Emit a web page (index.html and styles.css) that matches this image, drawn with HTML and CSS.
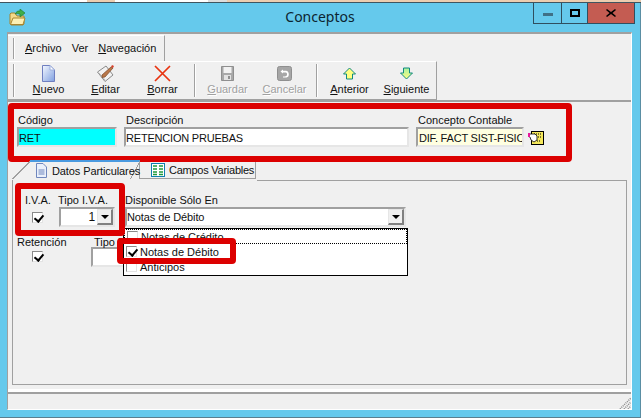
FILE: index.html
```html
<!DOCTYPE html>
<html lang="es">
<head>
    <meta charset="UTF-8">
    <meta name="viewport" content="width=device-width, initial-scale=1.0">
    <title>Conceptos</title>
    <link rel="stylesheet" href="styles.css">
</head>
<body>

<div class="desktop-strip"></div>

<div class="window">
    <div class="titlebar">
        <svg class="app-icon" width="17" height="17" viewBox="0 0 17 17">
            <path d="M1 5 L1 15 L2 16 L14 16 L15 15 L15 7 L8 7 L6 4 L2 4 Z" fill="#f3d98a" stroke="#a8852f"/>
            <path d="M1.500 15.500 L4 9 L16 9 L14 15.500 Z" fill="#fdf0b4" stroke="#a8852f"/>
            <path d="M6 5 Q8 1 11 2 L11 0 L16 4 L11 8 L11 5 Q8 4 6 5 Z" fill="#3fae49" stroke="#1c7a2c" stroke-width="0.600"/>
        </svg>
        <div class="title">Conceptos</div>
        <div class="win-buttons">
            <div class="win-btn win-min"><span class="min-glyph"></span></div>
            <div class="win-btn win-max"><span class="max-glyph"></span></div>
            <div class="win-btn win-close">
                <svg width="10" height="8" viewBox="0 0 10 8"><path d="M1 0 L5 3 L9 0 L10 1 L6.500 4 L10 7 L9 8 L5 5 L1 8 L0 7 L3.500 4 L0 1 Z" fill="#000"/></svg>
            </div>
        </div>
    </div>

    <div class="client">
        <div class="menu-band">
            <div class="gripper"></div>
            <div class="menu-item"><u>A</u>rchivo</div>
            <div class="menu-item">Ver</div>
            <div class="menu-item"><u>N</u>avegación</div>
        </div>

        <div class="tool-band">
            <div class="gripper"></div>
            <div class="tool-btn">
                <svg width="15" height="17" viewBox="0 0 15 17">
                    <defs><linearGradient id="pg" x1="0" y1="0" x2="1" y2="1"><stop offset="0" stop-color="#f4f8ff"/><stop offset="1" stop-color="#7f9fe0"/></linearGradient></defs>
                    <path d="M1.500 0.500 L9 0.500 L13.500 5 L13.500 16.500 L1.500 16.500 Z" fill="url(#pg)" stroke="#6f7fc0"/>
                    <path d="M9 0.500 L9 5 L13.500 5 Z" fill="#fff" stroke="#9fb0dc"/>
                </svg>
                <span><u>N</u>uevo</span>
            </div>
            <div class="tool-btn">
                <svg width="17" height="17" viewBox="0 0 17 17">
                    <path d="M0.500 7 L9 1 L16 10 L8 16.500 Z" fill="#f2f2f2" stroke="#8a8a8a"/>
                    <path d="M2 8 L8 15" stroke="#b8b8b8" fill="none"/>
                    <path d="M5 10 L14 2 L16 3 L8 12 L5 12.500 Z" fill="#b9774a" stroke="#7a4a2a" stroke-width="0.700"/>
                    <path d="M14 1 L16 0 L17 2 L15 3 Z" fill="#d8402c"/>
                </svg>
                <span><u>E</u>ditar</span>
            </div>
            <div class="tool-btn">
                <svg width="17" height="17" viewBox="0 0 17 17"><path d="M1 1 L16 16 M16 1 L1 16" stroke="#e8330f" stroke-width="1.700" fill="none"/></svg>
                <span><u>B</u>orrar</span>
            </div>
            <div class="tool-sep"></div>
            <div class="tool-btn disabled">
                <svg width="15" height="17" viewBox="0 0 15 17">
                    <path d="M1.500 1.500 L13.500 1.500 L13.500 15.500 L1.500 15.500 Z" fill="#a8a8a8" stroke="#8f8f8f"/>
                    <rect x="3.500" y="2" width="8" height="6" fill="#f2f2f2"/>
                    <rect x="4" y="10" width="7" height="5" fill="#e2e2e2"/>
                    <rect x="8" y="11" width="2" height="3" fill="#8f8f8f"/>
                </svg>
                <span><u>G</u>uardar</span>
            </div>
            <div class="tool-btn disabled">
                <svg width="15" height="17" viewBox="0 0 15 17">
                    <rect x="0.500" y="1.500" width="14" height="14" rx="2" fill="#a6a6a6" stroke="#8f8f8f"/>
                    <path d="M6 4.500 L3.500 6.500 L6 8.500 L6 7.500 L9 7.500 Q10.500 8 10 10 Q9.500 11.500 6 11.500 L6 12.500 L9.500 12.500 Q12 12 11.800 9 Q11.500 6 9 5.800 L6 5.800 Z" fill="#fff"/>
                </svg>
                <span><u>C</u>ancelar</span>
            </div>
            <div class="tool-sep"></div>
            <div class="tool-btn">
                <svg width="15" height="17" viewBox="0 0 15 17">
                    <path d="M7.500 3 L13.500 9 L10.500 9 L10.500 14 L4.500 14 L4.500 9 L1.500 9 Z" fill="#ffff80" stroke="#0f8a80"/>
                </svg>
                <span><u>A</u>nterior</span>
            </div>
            <div class="tool-btn">
                <svg width="15" height="17" viewBox="0 0 15 17">
                    <defs><linearGradient id="dn" x1="0" y1="0" x2="0" y2="1"><stop offset="0" stop-color="#a8f0a0"/><stop offset="1" stop-color="#ffff80"/></linearGradient></defs>
                    <path d="M4.500 3 L10.500 3 L10.500 8 L13.500 8 L7.500 14 L1.500 8 L4.500 8 Z" fill="url(#dn)" stroke="#0f8a80"/>
                </svg>
                <span><u>S</u>iguiente</span>
            </div>
        </div>

        <div class="header-panel">
            <div class="field field-code">
                <label>Código</label>
                <div class="input input-cyan">RET</div>
            </div>
            <div class="field field-desc">
                <label>Descripción</label>
                <div class="input">RETENCION PRUEBAS</div>
            </div>
            <div class="field field-concept">
                <label>Concepto Contable</label>
                <div class="input input-yellow">DIF. FACT SIST-FISIC</div>
            </div>
            <svg class="lookup-icon" width="16" height="15" viewBox="0 0 16 15">
                <rect x="3.500" y="0.500" width="12" height="13" fill="#f5e85c" stroke="#000"/>
                <path d="M6 3 L13 3 M10 6 L13 6 M9 10 L13 10" stroke="#000" stroke-dasharray="1 1"/>
                <path d="M0 3 L7 3 L9 5 L9 9 L6 11 L3 9 L2 6 L0 5 Z" fill="#fff" stroke="#000" stroke-width="0.800"/>
                <rect x="0" y="2" width="2" height="4" fill="#e8189c"/>
            </svg>
        </div>

        <div class="tabs">
            <div class="tab tab-active">
                <svg class="tab-icon" width="13" height="15" viewBox="0 0 13 15">
                    <path d="M1.500 0.500 L8 0.500 L11.500 4 L11.500 14.500 L1.500 14.500 Z" fill="#eaf0fb" stroke="#6f86bd"/>
                    <path d="M3.500 7 L9.500 7 M3.500 9 L9.500 9 M3.500 11 L9.500 11" stroke="#6f86bd"/>
                </svg>
                Datos Particulares
            </div>
            <div class="tab">
                <svg class="tab-icon" width="14" height="14" viewBox="0 0 14 14">
                    <rect x="0.500" y="0.500" width="13" height="13" fill="#fff" stroke="#0f7fb0"/>
                    <path d="M2 3 L6 3 M8 3 L12 3 M2 6 L6 6 M8 6 L12 6 M2 9 L6 9 M8 9 L12 9 M2 11.500 L6 11.500 M8 11.500 L12 11.500" stroke="#1f9a3c" stroke-width="1.500"/>
                </svg>
                Campos Variables
            </div>
        </div>

        <div class="tab-page">
            <div class="tab-row tab-row-first">
                <div class="field field-iva">
                    <label>I.V.A.</label>
                    <div class="check-cell"><span class="checkbox checked"></span></div>
                </div>
                <div class="field field-tipo">
                    <label>Tipo I.V.A.</label>
                    <div class="input combo">
                        <span class="combo-value combo-number">1</span>
                        <span class="combo-btn"><span class="arrow"></span></span>
                    </div>
                </div>
                <div class="field field-disp">
                    <label>Disponible Sólo En</label>
                    <div class="input combo">
                        <span class="combo-value">Notas de Débito</span>
                        <span class="combo-btn"><span class="arrow"></span></span>
                    </div>
                </div>
            </div>
            <div class="tab-row tab-row-second">
                <div class="field field-ret">
                    <label>Retención</label>
                    <div class="check-cell"><span class="checkbox checked"></span></div>
                </div>
                <div class="field field-tipo-ret">
                    <label>Tipo Retención</label>
                    <div class="input"></div>
                </div>
            </div>
        </div>

        <div class="status-bar">
            <svg class="grip" width="12" height="12" viewBox="0 0 12 12">
                <path d="M1 12 L12 1 M5 12 L12 5 M9 12 L12 9" stroke="#8a8a8a" stroke-width="1.500" stroke-dasharray="1 1"/>
            </svg>
        </div>
    </div>
</div>

<div class="drop-list">
    <div class="drop-item drop-focus"><span class="checkbox"></span>Notas de Crédito</div>
    <div class="drop-item"><span class="checkbox checked"></span>Notas de Débito</div>
    <div class="drop-item"><span class="checkbox"></span>Anticipos</div>
</div>

<div class="mark mark-header"></div>
<div class="mark mark-iva"></div>
<div class="mark mark-debito"></div>

</body>
</html>
```

FILE: styles.css
```css
* {
    box-sizing: border-box;
}
html, body {
    margin: 0;
    padding: 0;
}
body {
    position: relative;
    width: 641px;
    height: 418px;
    overflow: hidden;
    font-family: "Liberation Sans", Arial, sans-serif;
    font-size: 11px;
    color: #111;
    background-color: #65c9ec;
}
label {
    display: block;
    height: 13px;
    line-height: 13px;
    white-space: nowrap;
}

/* window frame */
.desktop-strip {
    height: 3px;
    border-bottom: 1px solid #3f5560;
    background: linear-gradient(to right, #fff 0, #fff 87px, #eccdb0 87px, #eccdb0 115px, #fff 115px, #fff 208px, #ddd 208px, #ddd 227px, #eccdb0 227px);
}
.window {
    height: 415px;
    border-right: 1px solid #5a8ea3;
    border-bottom: 1px solid #5a7f8f;
    display: flex;
    flex-direction: column;
}
.titlebar {
    height: 29px;
    display: flex;
    position: relative;
    padding-left: 9px;
}
.app-icon {
    margin-top: 6px;
}
.title {
    position: absolute;
    left: 0;
    right: 0;
    top: 3px;
    text-align: center;
    font-family: "Noto Sans", sans-serif;
    font-size: 14px;
    line-height: 22px;
    color: #0c2430;
}
.win-buttons {
    display: flex;
    height: 21px;
    margin-left: auto;
    margin-right: 5px;
    border: 1px solid #2f4f5f;
    border-top: 0;
}
.win-btn {
    display: flex;
    align-items: center;
    justify-content: center;
}
.win-min {
    width: 28px;
    border-right: 1px solid #2f4f5f;
}
.min-glyph {
    width: 10px;
    height: 3px;
    margin-top: 3px;
    background-color: #3f7086;
}
.win-max {
    width: 26px;
    border-right: 1px solid #2f4f5f;
}
.max-glyph {
    width: 10px;
    height: 8px;
    border: 2px solid #000;
}
.win-close {
    width: 46px;
    background-color: #c45c52;
}

/* client area */
.client {
    flex: 1;
    margin: 0 8px 7px 7px;
    border-top: 2px solid #a0a0a0;
    border-left: 1px solid #a0a0a0;
    border-right: 1px solid #fff;
    border-bottom: 1px solid #fff;
    background-color: #f0f0f0;
    display: flex;
    flex-direction: column;
}
.gripper {
    width: 2px;
    margin: 2px 6px 2px 5px;
    background-color: #fff;
    border-left: 1px solid #a0a0a0;
}
.menu-band {
    width: 157px;
    height: 26px;
    margin-top: 1px;
    display: flex;
    align-items: stretch;
    border-top: 1px solid #fff;
    border-right: 1px solid #a0a0a0;
    line-height: 24px;
}
.menu-item {
    padding: 0 5px;
}
.menu-band .gripper {
    margin-right: 5px;
}
.tool-band {
    width: 429px;
    height: 39px;
    display: flex;
    border-top: 1px solid #fff;
    border-right: 1px solid #a0a0a0;
    border-bottom: 1px solid #a0a0a0;
}
.tool-band > .gripper {
    margin-right: 5px;
}
.tool-btn {
    width: 57px;
    flex-shrink: 0;
    display: flex;
    flex-direction: column;
    align-items: center;
    padding-top: 3px;
}
.tool-btn span {
    margin-top: 1px;
    line-height: 13px;
}
.tool-btn.disabled span {
    color: #a0a0a0;
    text-shadow: 1px 1px 0 #fff;
}
.tool-sep {
    width: 2px;
    margin: 2px 3px 2px 3px;
    background-color: #fff;
    border-left: 1px solid #a0a0a0;
}

/* header */
.header-panel {
    height: 60px;
    flex-shrink: 0;
    border-top: 2px solid #a0a0a0;
    padding: 12px 0 0 9px;
    display: flex;
}
.input {
    height: 20px;
    padding: 2px 1px;
    line-height: 14px;
    background-color: #fff;
    letter-spacing: -0.200px;
    white-space: nowrap;
    overflow: hidden;
    border-top: 2px solid #a0a0a0;
    border-left: 2px solid #a0a0a0;
    border-right: 2px solid #e6e6e6;
    border-bottom: 2px solid #e6e6e6;
}
.input-cyan {
    background-color: #0ff;
}
.input-yellow {
    background-color: #ffffe1;
}
.field-code {
    width: 100px;
    margin-right: 7px;
}
.field-desc {
    width: 285px;
    margin-right: 7px;
}
.field-code .input, .field-desc .input {
    padding-left: 0;
}
.field-desc label, .field-code label, .field-concept label {
    padding-left: 2px;
}
.field-code label {
    padding-left: 1px;
}
.field-concept {
    width: 108px;
}
.lookup-icon {
    margin: 17px 0 0 4px;
}

/* tabs */
.tabs {
    height: 20px;
    flex-shrink: 0;
    display: flex;
    padding-left: 22px;
}
.tab {
    position: relative;
    height: 18px;
    margin-top: 1px;
    padding: 0 2px 0 4px;
    display: flex;
    align-items: center;
    white-space: nowrap;
    letter-spacing: -0.250px;
    border-top: 1px solid #a0a0a0;
    border-right: 1px solid #a0a0a0;
    border-bottom: 1px solid #a0a0a0;
}
.tab-active {
    z-index: 1;
    height: 19px;
    margin-top: 0;
    width: 110px;
    letter-spacing: -0.100px;
    border-top: 2px solid #4a9ae0;
    border-bottom: 0;
    padding-left: 5px;
}
.tab-icon {
    flex-shrink: 0;
    margin-right: 4px;
}
.tab::before {
    content: "";
    position: absolute;
    left: -10px;
    bottom: -1px;
    width: 10px;
    height: 18px;
    background: linear-gradient(to bottom right, transparent 49%, #a0a0a0 49%, #a0a0a0 55%, #f0f0f0 55%);
}
.tab-active::before {
    left: -18px;
    width: 18px;
    bottom: 0;
}
.tab:not(.tab-active) {
    width: 116px;
    padding-left: 11px;
}
.tab-page {
    height: 205px;
    flex-shrink: 0;
    margin: 0 4px 0 4px;
    border: 1px solid #a0a0a0;
    border-top: 0;
    position: relative;
}
.tab-page::before {
    content: "";
    position: absolute;
    top: 0;
    left: 244px;
    right: -1px;
    border-top: 1px solid #a0a0a0;
}
.tab-row {
    display: flex;
}
.tab-row-first {
    padding: 14px 0 0 12px;
}
.tab-row-second {
    padding: 9px 0 0 4px;
}
.field-iva {
    width: 33px;
}
.field-tipo {
    width: 57px;
    margin-right: 10px;
}
.field-tipo .combo {
    margin-left: 1px;
}
.field-disp {
    width: 281px;
}
.check-cell {
    height: 20px;
    padding: 5px 0 0 7px;
}
.field-ret {
    width: 74px;
}
.field-ret .check-cell {
    padding: 2px 0 0 15px;
}
.field-tipo-ret {
    width: 100px;
}
.field-tipo-ret label {
    padding-left: 3px;
}
.field-tipo-ret .input {
    margin-top: -2px;
}
.checkbox {
    display: block;
    width: 11px;
    height: 11px;
    flex-shrink: 0;
    background-color: #fff;
    border-top: 1px solid #8a8a8a;
    border-left: 1px solid #8a8a8a;
    border-right: 1px solid #e3e3e3;
    border-bottom: 1px solid #e3e3e3;
    position: relative;
}
.checkbox.checked::after {
    content: "";
    position: absolute;
    left: 3px;
    top: 0;
    width: 4px;
    height: 7px;
    border-right: 2px solid #000;
    border-bottom: 2px solid #000;
    transform: rotate(40deg);
}
.combo {
    display: flex;
    padding: 0;
    letter-spacing: -0.100px;
}
.combo-value {
    flex: 1;
    padding: 1px 0 0 0;
}
.combo-number {
    text-align: right;
    padding-right: 2px;
    font-size: 12px;
}
.combo-btn {
    width: 16px;
    height: 16px;
    display: flex;
    align-items: center;
    justify-content: center;
    background-color: #f0f0f0;
    border-top: 1px solid #e6e6e6;
    border-left: 1px solid #e6e6e6;
    border-right: 2px solid #808080;
    border-bottom: 2px solid #808080;
}
.arrow {
    width: 0;
    height: 0;
    border-left: 4px solid transparent;
    border-right: 4px solid transparent;
    border-top: 4px solid #000;
}

/* status bar */
.status-bar {
    flex: 1;
    margin-top: 7px;
    position: relative;
    border-top: 2px solid #a0a0a0;
    box-shadow: 0 -3px 0 #fff;
}
.grip {
    position: absolute;
    right: 0;
    bottom: 0;
}

/* dropdown list, lies over the tab page */
.drop-list {
    position: absolute;
    left: 123px;
    top: 228px;
    width: 285px;
    height: 48px;
    background-color: #fff;
    border: 1px solid #000;
}
.drop-item {
    height: 15px;
    display: flex;
    align-items: center;
    gap: 3px;
    padding-left: 2px;
    white-space: nowrap;
}
.drop-focus {
    border: 1px dotted #000;
}

/* red marks drawn on top of the screenshot */
.mark {
    position: absolute;
    border: 6px solid #dc0000;
    border-radius: 4px;
}
.mark-header {
    left: 8px;
    top: 103px;
    width: 564px;
    height: 59px;
}
.mark-iva {
    left: 15px;
    top: 183px;
    width: 110px;
    height: 53px;
}
.mark-debito {
    left: 117px;
    top: 238px;
    width: 119px;
    height: 26px;
}
```
